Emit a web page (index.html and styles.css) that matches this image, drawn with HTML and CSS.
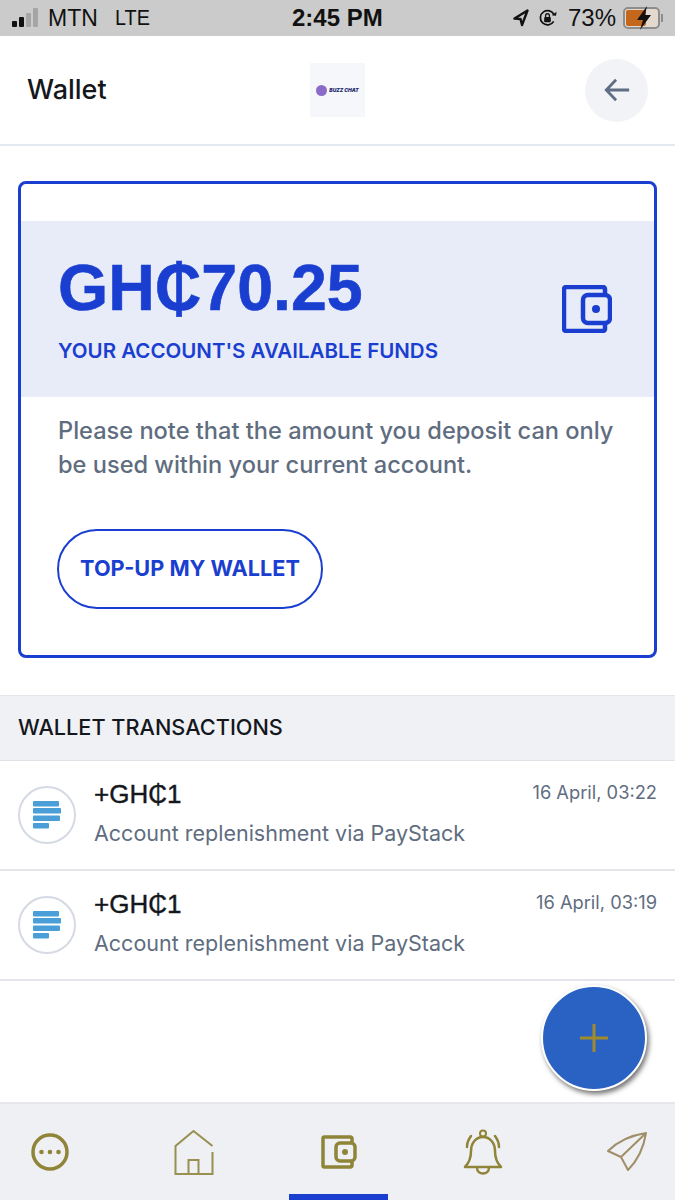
FILE: index.html
```html
<!DOCTYPE html>
<html lang="en">
<head>
    <meta charset="UTF-8">
    <meta name="viewport" content="width=device-width, initial-scale=1.0">
    <title>Wallet</title>
    <link rel="stylesheet" href="styles.css">
</head>
<body>
    <div class="status-bar">
        <div class="status-left">
            <div class="signal">
                <span class="bar bar-1"></span>
                <span class="bar bar-2"></span>
                <span class="bar bar-3 dim"></span>
                <span class="bar bar-4 dim"></span>
            </div>
            <span>MTN</span>
            <span class="lte">LTE</span>
        </div>
        <div class="status-time">2:45 PM</div>
        <div class="status-right">
            <svg width="16" height="18" viewBox="0 0 16 18"><path d="M14.500 1.500 1.500 9.500l6 .5 1.500 6z" fill="none" stroke="#111" stroke-width="2.400" stroke-linejoin="round"/></svg>
            <svg width="19" height="20" viewBox="0 0 20 20"><path d="M16.500 13.500A7.500 7.500 0 1 1 17 7" fill="none" stroke="#111" stroke-width="1.800"/><path d="m14.500 7 4.500.5.500-4z" fill="#111"/><rect x="6.500" y="9" width="7" height="5.500" rx="1" fill="#111"/><path d="M8 9V7.500a2 2 0 0 1 4 0V9" fill="none" stroke="#111" stroke-width="1.400"/></svg>
            <span class="percent">73%</span>
            <div class="battery">
                <div class="battery-fill"></div>
                <svg class="bolt" width="16" height="24" viewBox="0 0 16 24"><path d="M11 0 1 14h6l-3 10 11-15H9z" fill="#111"/></svg>
            </div>
            <span class="battery-tip"></span>
        </div>
    </div>

    <header class="app-header">
        <h1>Wallet</h1>
        <div class="logo">
            <span class="logo-mark"></span>
            <span class="logo-text">BUZZ CHAT</span>
        </div>
        <button class="back-btn">
            <svg width="28" height="28" viewBox="0 0 30 30"><path d="M28 15H4M14 4 3.500 15 14 26" fill="none" stroke="#5f6d85" stroke-width="3"/></svg>
        </button>
    </header>

    <main class="content">
        <section class="wallet-card">
            <div class="funds">
                <div class="funds-text">
                    <div class="amount">GH₵70.25</div>
                    <div class="funds-label">YOUR ACCOUNT'S AVAILABLE FUNDS</div>
                </div>
                <svg width="50" height="48" viewBox="0 0 50 48"><path d="M43 9V4a2 2 0 0 0-2-2H4a2 2 0 0 0-2 2v40a2 2 0 0 0 2 2h37a2 2 0 0 0 2-2v-5" fill="none" stroke="#1a3fd0" stroke-width="4.500"/><rect x="21" y="10" width="27" height="28" rx="5" fill="none" stroke="#1a3fd0" stroke-width="4.500"/><circle cx="34" cy="24" r="4" fill="#1a3fd0"/></svg>
            </div>
            <p class="note">Please note that the amount you deposit can only be used within your current account.</p>
            <button class="topup-btn">TOP-UP MY WALLET</button>
        </section>

        <h2 class="section-title">WALLET TRANSACTIONS</h2>

        <div class="tx-row">
            <div class="tx-icon">
                <svg width="30" height="28" viewBox="0 0 30 28"><rect x="1" y="0" width="26" height="5.500" rx="1" fill="#4a9fd8"/><rect x="1" y="7" width="28" height="5.500" rx="1" fill="#4a9fd8"/><rect x="1" y="14.500" width="27" height="5.500" rx="1" fill="#4a9fd8"/><rect x="1" y="22" width="16" height="5.500" rx="1" fill="#4a9fd8"/></svg>
            </div>
            <div class="tx-body">
                <div class="tx-top">
                    <span class="tx-amount">+GH₵1</span>
                    <span class="tx-date">16 April, 03:22</span>
                </div>
                <div class="tx-desc">Account replenishment via PayStack</div>
            </div>
        </div>
        <div class="tx-row">
            <div class="tx-icon">
                <svg width="30" height="28" viewBox="0 0 30 28"><rect x="1" y="0" width="26" height="5.500" rx="1" fill="#4a9fd8"/><rect x="1" y="7" width="28" height="5.500" rx="1" fill="#4a9fd8"/><rect x="1" y="14.500" width="27" height="5.500" rx="1" fill="#4a9fd8"/><rect x="1" y="22" width="16" height="5.500" rx="1" fill="#4a9fd8"/></svg>
            </div>
            <div class="tx-body">
                <div class="tx-top">
                    <span class="tx-amount">+GH₵1</span>
                    <span class="tx-date">16 April, 03:19</span>
                </div>
                <div class="tx-desc">Account replenishment via PayStack</div>
            </div>
        </div>
    </main>

    <button class="fab">
        <svg width="30" height="30" viewBox="0 0 30 30"><path d="M15 1v28M1 15h28" stroke="#a08a2a" stroke-width="3"/></svg>
    </button>

    <nav class="bottom-nav">
        <div class="nav-item">
            <svg width="38" height="38" viewBox="0 0 38 38"><circle cx="19" cy="19" r="17" fill="none" stroke="#8f8437" stroke-width="3.500"/><circle cx="10.500" cy="19" r="2.300" fill="#8f8437"/><circle cx="19" cy="19" r="2.300" fill="#8f8437"/><circle cx="27.500" cy="19" r="2.300" fill="#8f8437"/></svg>
        </div>
        <div class="nav-item">
            <svg width="40" height="45" viewBox="0 0 40 45"><path d="M38.500 16 19.500 1 1.500 16v28h37V22" fill="none" stroke="#979050" stroke-width="2"/><path d="M14.500 44V30h10v14" fill="none" stroke="#979050" stroke-width="2"/></svg>
        </div>
        <div class="nav-item active">
            <svg width="36" height="34" viewBox="0 0 36 34"><path d="M31 7V3.500A1.500 1.500 0 0 0 29.500 2h-26A1.500 1.500 0 0 0 2 3.500v27A1.500 1.500 0 0 0 3.500 32h26a1.500 1.500 0 0 0 1.500-1.500V27" fill="none" stroke="#8f8437" stroke-width="3.500"/><rect x="15" y="8" width="19" height="18" rx="4" fill="none" stroke="#8f8437" stroke-width="3.500"/><circle cx="24" cy="17" r="3" fill="#8f8437"/></svg>
        </div>
        <div class="nav-item">
            <svg width="42" height="46" viewBox="0 0 42 46"><path d="M3 38c4-4 6-8 6-16 0-8 5-14 12-14s12 6 12 14c0 8 2 12 6 16z" fill="none" stroke="#8f8437" stroke-width="2.500" stroke-linejoin="round"/><circle cx="21" cy="4.500" r="3" fill="none" stroke="#8f8437" stroke-width="2"/><path d="M15 38.500c0 8 12 8 12 0" fill="none" stroke="#8f8437" stroke-width="2.500"/><path d="M5 18c0-4 1-7 4-11M37 18c0-4-1-7-4-11" fill="none" stroke="#8f8437" stroke-width="2.500" stroke-linecap="round"/></svg>
        </div>
        <div class="nav-item">
            <svg width="40" height="40" viewBox="0 0 40 40"><path d="M39 1C26 3 11 9 1 19l13 6 7 13C31 28 37 14 39 1zM39 1 14 25" fill="none" stroke="#a08e68" stroke-width="2" stroke-linejoin="round"/></svg>
        </div>
    </nav>
</body>
</html>
```

FILE: styles.css
```css
* {
    box-sizing: border-box;
}

body {
    margin: 0;
    height: 1200px;
    position: relative;
    overflow: hidden;
    background: #fff;
    color: #14171c;
    font-family: "Inter", sans-serif;
    display: flex;
    flex-direction: column;
}

.status-bar {
    height: 36px;
    background: #cbcbcb;
    display: flex;
    align-items: center;
    justify-content: space-between;
    padding: 0 12px 0 12px;
    font-family: "Liberation Sans", sans-serif;
    font-size: 23px;
    color: #111;
    position: relative;
}

.status-left,
.status-right {
    display: flex;
    align-items: center;
}

.status-left {
    gap: 9px;
}

.lte {
    margin-left: 8px;
    font-size: 22px;
    transform: scaleX(0.9);
    transform-origin: left;
}

.signal {
    display: flex;
    align-items: flex-end;
    gap: 2px;
    height: 18px;
    margin-right: 1px;
}

.bar {
    width: 5px;
    background: #111;
    border-radius: 1px;
}

.bar.dim {
    background: #a5a5a5;
}

.bar-1 { height: 6px; }
.bar-2 { height: 10px; }
.bar-3 { height: 14px; }
.bar-4 { height: 19px; }

.status-time {
    position: absolute;
    left: 292px;
    font-weight: 700;
    font-size: 24px;
}

.status-right {
    gap: 9px;
}

.percent {
    margin-left: 2px;
    margin-right: -2px;
    font-size: 24px;
}

.battery {
    width: 37px;
    height: 22px;
    border: 2px solid #8d8d8d;
    border-radius: 5px;
    padding: 1px;
    position: relative;
    background: #e3d9cf;
}

.battery-fill {
    width: 20px;
    height: 100%;
    background: #c4661c;
    border-radius: 2px;
}

.bolt {
    position: absolute;
    left: 11px;
    top: -3px;
}

.battery-tip {
    width: 2px;
    height: 8px;
    margin-left: -8px;
    background: #8d8d8d;
}

.app-header {
    height: 110px;
    border-bottom: 2px solid #e4e8f1;
    display: flex;
    align-items: center;
    justify-content: space-between;
    padding: 0 27px;
    position: relative;
}

.app-header h1 {
    margin: 0 0 2px;
    font-size: 27px;
    font-weight: 500;
}

.logo {
    position: absolute;
    left: 310px;
    top: 27px;
    width: 55px;
    height: 54px;
    background: #f6f7fb;
    display: flex;
    align-items: center;
    justify-content: center;
    gap: 2px;
}

.logo-mark {
    width: 11px;
    height: 11px;
    border-radius: 50%;
    background: #8a6cc8;
}

.logo-text {
    font-size: 5px;
    font-weight: 900;
    font-style: italic;
    color: #23296a;
    white-space: nowrap;
}

.back-btn {
    width: 63px;
    height: 63px;
    border: 0;
    border-radius: 50%;
    background: #f1f3f6;
    display: flex;
    align-items: center;
    justify-content: center;
    padding: 0;
}

.content {
    flex: 1;
    padding-top: 35px;
}

.wallet-card {
    margin: 0 18px;
    height: 477px;
    border: 3px solid #1a3fd0;
    border-radius: 8px;
    padding-top: 36px;
}

.funds {
    height: 176px;
    margin-top: 1px;
    background: #e8ecf9;
    padding: 0 42px 0 37px;
    display: flex;
    align-items: center;
    justify-content: space-between;
    color: #1a3fd0;
}

.amount {
    font-family: "Liberation Sans", sans-serif;
    font-size: 64.5px;
    font-weight: 700;
    line-height: 70px;
    margin-top: -3px;
    -webkit-text-stroke: 0.6px #1a3fd0;
}

.funds-label {
    margin-top: 15px;
    font-size: 20.5px;
    font-weight: 600;
}

.note {
    margin: 17px 30px 0 37px;
    font-size: 23.6px;
    font-weight: 500;
    line-height: 34px;
    color: #5f6d80;
}

.topup-btn {
    display: block;
    margin: 47px 0 0 36px;
    width: 266px;
    height: 80px;
    border: 2px solid #1a3fd0;
    border-radius: 40px;
    background: #fff;
    color: #1a3fd0;
    font-family: "Inter", sans-serif;
    font-size: 21.7px;
    font-weight: 700;
    padding: 0 0 2px;
}

.section-title {
    margin: 37px 0 0;
    height: 66px;
    padding: 0 18px 3px;
    display: flex;
    align-items: center;
    background: #f0f1f5;
    border-top: 1px solid #e4e5ea;
    border-bottom: 1px solid #e0e1e6;
    font-size: 21.7px;
    font-weight: 500;
}

.tx-row {
    height: 110px;
    padding: 0 18px;
    display: flex;
    align-items: center;
    gap: 18px;
    border-bottom: 2px solid #e4e5e9;
}

.tx-icon {
    width: 58px;
    height: 58px;
    border: 2px solid #d5dae3;
    border-radius: 50%;
    display: flex;
    align-items: center;
    justify-content: center;
    flex-shrink: 0;
}

.tx-body {
    flex: 1;
    margin-top: -6px;
}

.tx-top {
    display: flex;
    align-items: flex-start;
    justify-content: space-between;
}

.tx-amount {
    font-family: "Liberation Sans", sans-serif;
    font-size: 26px;
    line-height: 34px;
    -webkit-text-stroke: 0.4px #14171c;
}

.tx-date {
    font-size: 18.3px;
    line-height: 24px;
    color: #5f6d80;
    margin-top: 3px;
}

.tx-desc {
    margin-top: 8px;
    font-size: 21.5px;
    line-height: 28px;
    color: #5f6d80;
}

.fab {
    position: absolute;
    left: 541px;
    top: 985px;
    width: 106px;
    height: 106px;
    border: 2px solid #fff;
    border-radius: 50%;
    background: #2a62c4;
    box-shadow: 2px 3px 5px rgba(0, 0, 0, 0.55);
    display: flex;
    align-items: center;
    justify-content: center;
    padding: 0;
}

.bottom-nav {
    height: 98px;
    background: #eff0f4;
    border-top: 2px solid #e6e7eb;
    display: grid;
    grid-template-columns: 99px 190px 99px 190px 97px;
    flex-shrink: 0;
}

.nav-item {
    display: flex;
    align-items: center;
    justify-content: center;
    position: relative;
}

.active::after {
    content: "";
    position: absolute;
    left: 0;
    right: 0;
    bottom: 0;
    height: 6px;
    background: #1a3fd0;
}
```
